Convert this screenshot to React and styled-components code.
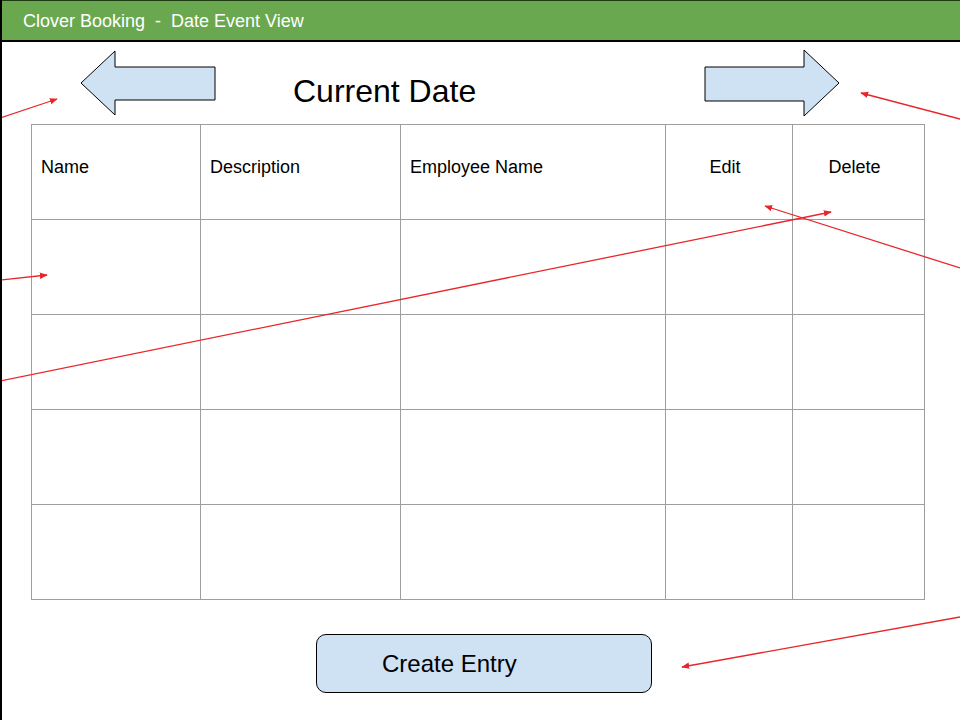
import React from "react";
import styled, { createGlobalStyle } from "styled-components";

const columns = [
  { label: "Name", width: 169, align: "left" },
  { label: "Description", width: 200, align: "left" },
  { label: "Employee Name", width: 265, align: "left" },
  { label: "Edit", width: 127, align: "center" },
  { label: "Delete", width: 132, align: "center" },
];

const emptyRows = [0, 1, 2, 3];

// red annotation lines drawn over the mockup
const notes = [
  { x1: 0, y1: 118, x2: 57, y2: 99 },
  { x1: 0, y1: 280, x2: 47, y2: 275 },
  { x1: 0, y1: 381, x2: 831, y2: 212 },
  { x1: 960, y1: 268, x2: 765, y2: 206 },
  { x1: 960, y1: 119, x2: 861, y2: 93 },
  { x1: 960, y1: 617, x2: 682, y2: 667 },
];

const App = () => {
  return (
    <>
      <GlobalStyle />
      <Page>
        <TopBar>Clover Booking  -  Date Event View</TopBar>
        <Main>
          <DateNav>
            <ArrowButton $offset={49} aria-label="previous day">
              <svg width="137" height="68" viewBox="0 0 137 68">
                <polygon
                  points="1,34 35,2 35,18 135,18 135,51 35,51 35,66"
                  fill="#cfe2f3"
                  stroke="#000"
                  strokeWidth="1"
                />
              </svg>
            </ArrowButton>
            <Title>Current Date</Title>
            <ArrowButton $offset={228} aria-label="next day">
              <svg width="137" height="68" viewBox="0 0 137 68">
                <polygon
                  points="1,18 100,18 100,1 135,34 100,67 100,52 1,52"
                  fill="#cfe2f3"
                  stroke="#000"
                  strokeWidth="1"
                />
              </svg>
            </ArrowButton>
          </DateNav>

          <Table>
            <thead>
              <tr>
                {columns.map((c) => (
                  <HeadCell key={c.label} $width={c.width} $align={c.align}>
                    {c.label}
                  </HeadCell>
                ))}
              </tr>
            </thead>
            <tbody>
              {emptyRows.map((r) => (
                <tr key={r}>
                  {columns.map((c) => (
                    <Cell key={c.label} />
                  ))}
                </tr>
              ))}
            </tbody>
          </Table>

          <Footer>
            <CreateButton>Create Entry</CreateButton>
          </Footer>
        </Main>

        <Notes width="960" height="720" viewBox="0 0 960 720">
          <defs>
            <marker
              id="tip"
              viewBox="0 0 10 10"
              refX="9"
              refY="5"
              markerWidth="8"
              markerHeight="8"
              markerUnits="userSpaceOnUse"
              orient="auto"
            >
              <path d="M0,1 L10,5 L0,9 Z" fill="#e8262a" />
            </marker>
          </defs>
          {notes.map((n, i) => (
            <line
              key={i}
              x1={n.x1}
              y1={n.y1}
              x2={n.x2}
              y2={n.y2}
              stroke="#e8262a"
              strokeWidth="1.3"
              markerEnd="url(#tip)"
            />
          ))}
        </Notes>
      </Page>
    </>
  );
};

export default App;

const GlobalStyle = createGlobalStyle`
  body {
    margin: 0;
    background: #fff;
    font-family: "Liberation Sans", Arial, sans-serif;
  }
`;

const Page = styled.div`
  position: relative;
  width: 960px;
  height: 720px;
  box-sizing: border-box;
  border-left: 2px solid #000;
  overflow: hidden;
  background: #fff;
`;

const TopBar = styled.div`
  height: 42px;
  box-sizing: border-box;
  border-top: 1px solid #1e3a12;
  border-bottom: 2px solid #000;
  background: #6aa84f;
  color: #fff;
  font-size: 18px;
  line-height: 40px;
  padding-left: 21px;
  white-space: pre;
`;

const Main = styled.div`
  padding-left: 29px;
`;

const DateNav = styled.div`
  display: flex;
  align-items: center;
  height: 82px;
`;

const ArrowButton = styled.div`
  display: flex;
  margin-left: ${(p) => p.$offset}px;
  svg {
    display: block;
  }
`;

const Title = styled.h1`
  margin: 0 0 0 76px;
  font-size: 32px;
  font-weight: normal;
  color: #000;
  line-height: 1;
  padding-top: 16px;
`;

const Table = styled.table`
  border-collapse: collapse;
  table-layout: fixed;
  width: 894px;
  font-size: 18px;
  color: #000;
`;

const HeadCell = styled.th`
  width: ${(p) => p.$width}px;
  height: 95px;
  box-sizing: border-box;
  border: 1px solid #9e9e9e;
  font-weight: normal;
  text-align: ${(p) => p.$align};
  vertical-align: middle;
  padding: ${(p) => (p.$align === "center" ? "0 17px 9px 9px" : "0 9px 9px 9px")};
`;

const Cell = styled.td`
  height: 95px;
  box-sizing: border-box;
  border: 1px solid #9e9e9e;
  padding: 0;
`;

const Footer = styled.div`
  padding-top: 34px;
  padding-left: 285px;
`;

const CreateButton = styled.button`
  display: flex;
  align-items: center;
  width: 336px;
  height: 59px;
  box-sizing: border-box;
  padding: 0 0 0 65px;
  background: #cfe2f3;
  border: 1px solid #000;
  border-radius: 10px;
  font-family: "Liberation Sans", Arial, sans-serif;
  font-size: 24px;
  color: #000;
  cursor: pointer;
`;

const Notes = styled.svg`
  position: absolute;
  left: -2px;
  top: 0;
  pointer-events: none;
`;
